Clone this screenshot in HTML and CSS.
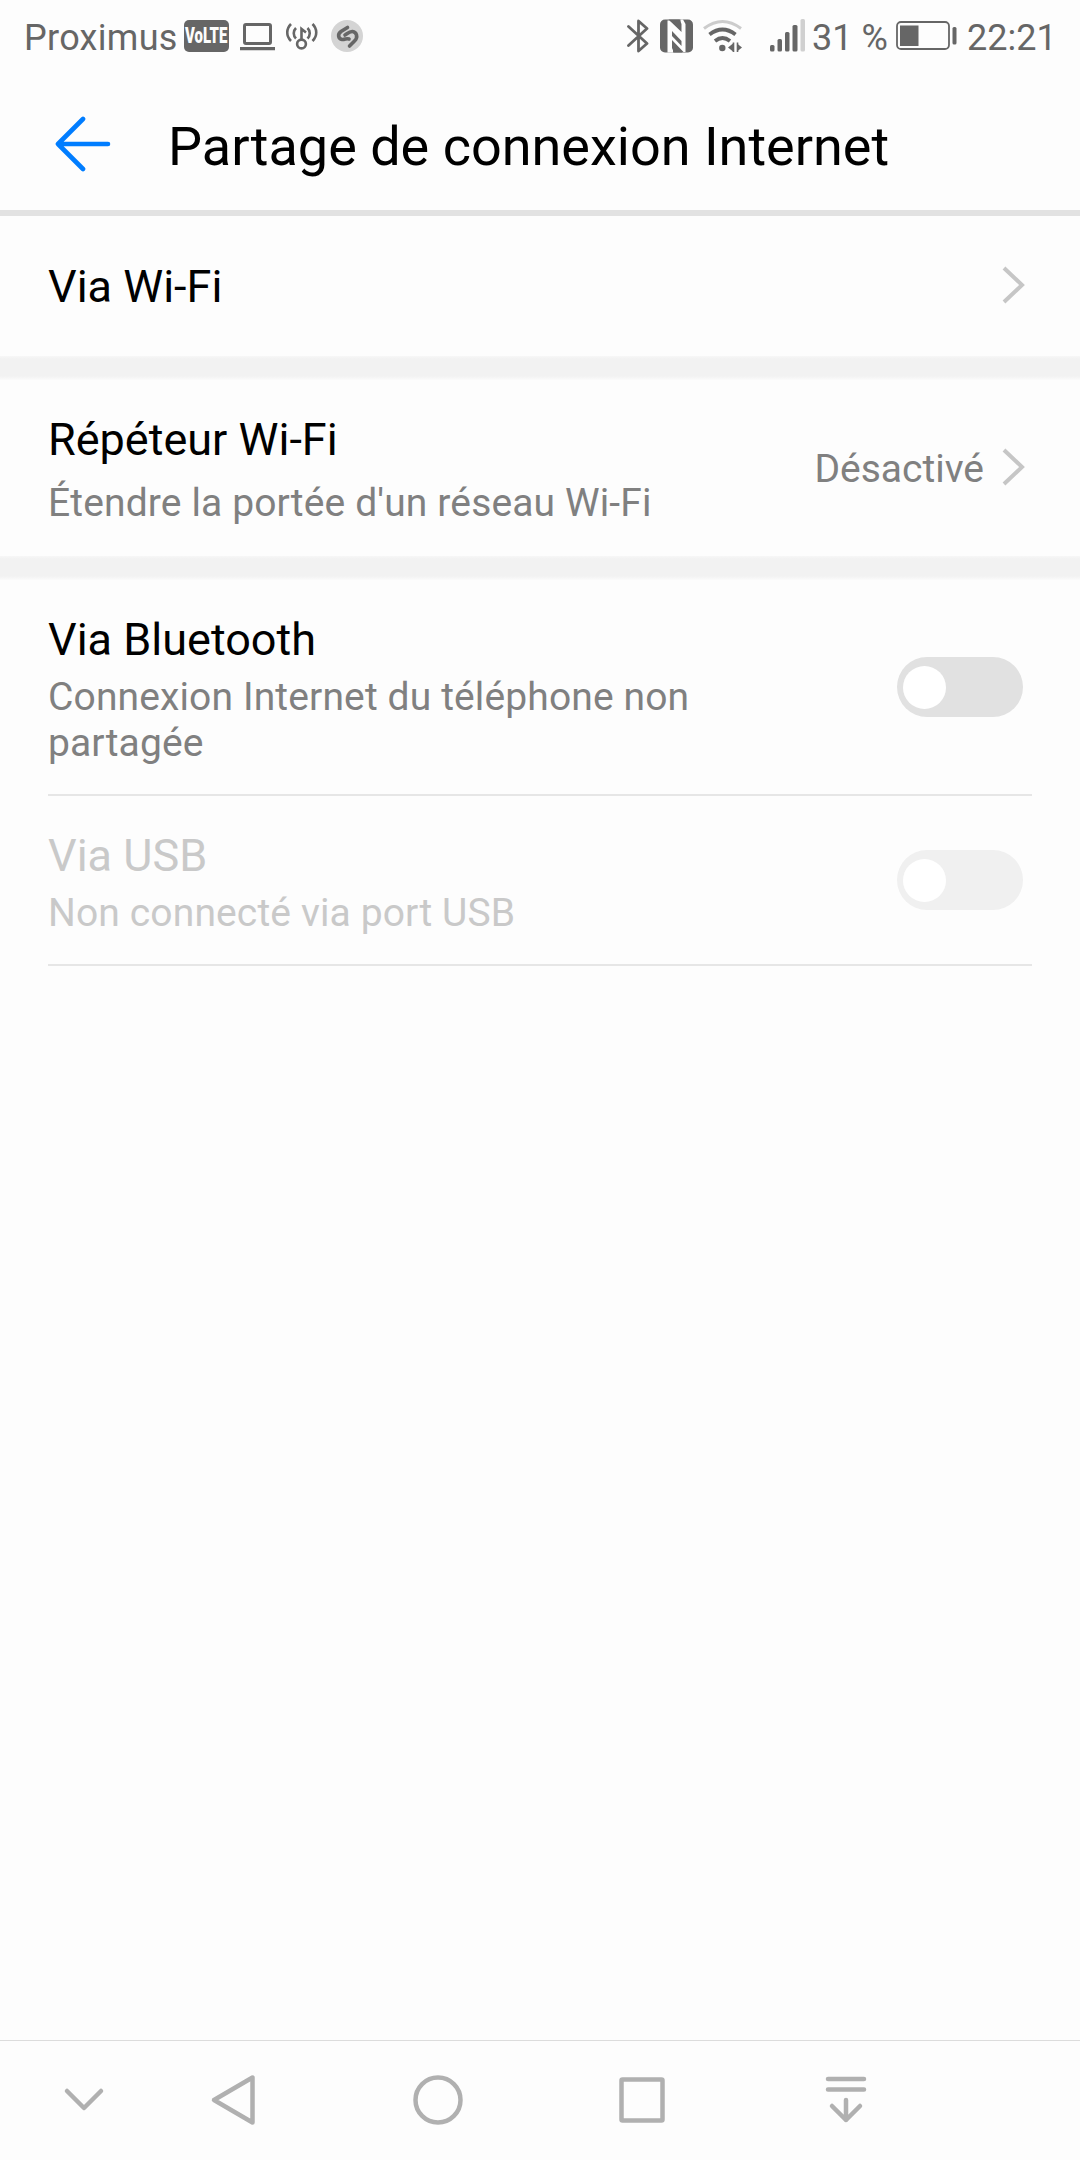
FILE: index.html
```html
<!DOCTYPE html>
<html lang="fr">
<head>
    <meta charset="UTF-8">
    <meta name="viewport" content="width=device-width, initial-scale=1.0">
    <title>Partage de connexion Internet</title>
    <link rel="stylesheet" href="styles.css">
</head>
<body>
    <div class="statusbar">
        <div class="status-left">
            <span class="carrier">Proximus</span>
            <span class="volte"><span class="volte-text">VoLTE</span></span>
            <svg class="icon-laptop" width="36" height="32" viewBox="0 0 36 32">
                <rect x="4.5" y="4.5" width="26" height="19" rx="1.5" fill="none" stroke="#666" stroke-width="3"/>
                <path d="M0 27h35v3.2H0z" fill="#666"/>
            </svg>
            <svg class="icon-hotspot" width="34" height="32" viewBox="0 0 34 32" fill="none" stroke="#666" stroke-width="2.6">
                <circle cx="16.5" cy="24" r="4.4"/>
                <path d="M16.500 19.500V9l4.500 3.500"/>
                <path d="M11 8c-3 3-3 7.500 0 10.500M6 4c-5 5-5 12 0 17M22.500 8c3 3 3 7.500 0 10.500M27.500 4c5 5 5 12 0 17"/>
            </svg>
            <svg class="icon-shazam" width="32" height="32" viewBox="0 0 32 32">
                <circle cx="16" cy="16" r="16" fill="#d4d4d4"/>
                <path d="M16.500 7.500L10 11.500c-4 3-2.500 7.500 1 8 3 .3 4.500-1.500 7-.5M18.500 26l5-5c4-4 2-9-2-9.500-3-.3-5 2-7.500 3.500" fill="none" stroke="#666" stroke-width="3.600" stroke-linecap="round"/>
            </svg>
        </div>
        <div class="status-right">
            <svg class="icon-bluetooth" width="22" height="34" viewBox="0 0 22 34" fill="none" stroke="#666" stroke-width="2.800">
                <path d="M1.500 7.500L20 24.500l-8.500 7.500V2L20 9.500 1.500 26.500" stroke-linejoin="round" stroke-linecap="round"/>
            </svg>
            <svg class="icon-nfc" width="34" height="34" viewBox="0 0 34 34">
                <rect x="0" y="0.500" width="33" height="33" rx="5" fill="#666"/>
                <path d="M7.500 33.500V1.500h2L21.500 13V5l-2-4.500h3.500L25.500 5v28h-2L12 21v8l2 4.500h-4z" fill="#fdfdfd"/>
                <path d="M12 12l9.500 10v5L12 17z" fill="#666"/>
                <path d="M8.500 0.500h12v9.500z" fill="#666"/>
                <path d="M13 24l9.500 9.500H13z" fill="#666"/>
            </svg>
            <svg class="icon-wifi" width="40" height="34" viewBox="0 0 40 34" fill="none" stroke="#666" stroke-width="3.800">
                <path d="M1 9.500Q19.500-4.500 38 9.500" stroke="#ccc" stroke-width="3"/>
                <path d="M6.500 15.500Q19.500 5.500 32.500 15.500M12 22q7.500-6 15 0"/>
                <circle cx="19.300" cy="29" r="3.200" fill="#666" stroke="none"/>
                <path d="M25 28.500l5-4v8zM39 28.500l-5-4v8z" fill="#666" stroke="none"/>
                <path d="M30.500 23.500v9.500M34.500 23.500v9.500" stroke-width="1.600"/>
            </svg>
            <svg class="icon-signal" width="36" height="34" viewBox="0 0 36 34">
                <rect x="0" y="26" width="4.500" height="6.500" rx="1.500" fill="#666"/>
                <rect x="7.500" y="20" width="4.500" height="12.500" rx="1.500" fill="#666"/>
                <rect x="15" y="13" width="4.500" height="19.500" rx="1.500" fill="#666"/>
                <rect x="22.500" y="6" width="5" height="26.500" rx="1.500" fill="#666"/>
                <rect x="30.500" y="0" width="4.500" height="32.500" rx="1.500" fill="#d0d0d0"/>
            </svg>
            <span class="percent">31 %</span>
            <svg class="icon-battery" width="62" height="30" viewBox="0 0 62 30">
                <rect x="1" y="1" width="52" height="27" rx="4" fill="none" stroke="#666" stroke-width="1.800"/>
                <rect x="4" y="4.500" width="18.500" height="20.500" fill="#666"/>
                <rect x="56.500" y="6" width="4" height="17.500" rx="1.500" fill="#666"/>
            </svg>
            <span class="clock">22:21</span>
        </div>
    </div>

    <div class="header">
        <svg class="back" width="58" height="58" viewBox="0 0 58 58">
            <path d="M53 29H3M28 4L3 29l25 25" fill="none" stroke="#007dff" stroke-width="4.600" stroke-linecap="round" stroke-linejoin="round"/>
        </svg>
        <h1>Partage de connexion Internet</h1>
    </div>

    <div class="list">
        <div class="row row-single">
            <div class="title">Via Wi-Fi</div>
            <svg class="chevron" width="24" height="40" viewBox="0 0 24 40">
                <path d="M3 2l18 17L3 36" fill="none" stroke="#c6c6c6" stroke-width="4"/>
            </svg>
        </div>
        <div class="gap"></div>
        <div class="row row-repeater">
            <div class="texts">
                <div class="title">Répéteur Wi-Fi</div>
                <div class="sub">Étendre la portée d'un réseau Wi-Fi</div>
            </div>
            <div class="value">Désactivé</div>
            <svg class="chevron" width="24" height="40" viewBox="0 0 24 40">
                <path d="M3 2l18 17L3 36" fill="none" stroke="#c6c6c6" stroke-width="4"/>
            </svg>
        </div>
        <div class="gap"></div>
        <div class="row row-bluetooth">
            <div class="texts">
                <div class="title">Via Bluetooth</div>
                <div class="sub">Connexion Internet du téléphone non partagée</div>
            </div>
            <div class="switch"><div class="knob"></div></div>
        </div>
        <div class="line"></div>
        <div class="row row-usb disabled">
            <div class="texts">
                <div class="title">Via USB</div>
                <div class="sub">Non connecté via port USB</div>
            </div>
            <div class="switch"><div class="knob"></div></div>
        </div>
        <div class="line"></div>
    </div>

    <div class="navbar">
        <svg class="nav-hide" width="42" height="26" viewBox="0 0 42 26">
            <path d="M4 4l17 17L38 4"/>
        </svg>
        <svg class="nav-back" width="46" height="54" viewBox="0 0 46 54">
            <path d="M42.500 4.500v45L4 27z"/>
        </svg>
        <svg class="nav-home" width="50" height="50" viewBox="0 0 50 50">
            <circle cx="25" cy="25" r="22.500"/>
        </svg>
        <svg class="nav-recent" width="46" height="46" viewBox="0 0 46 46">
            <rect x="2.500" y="2.500" width="41" height="41" rx="1"/>
        </svg>
        <svg class="nav-panel" width="42" height="48" viewBox="0 0 42 48">
            <path d="M3 3h36M3 13.500h36M21 24v20M7 30l14 14 14-14"/>
        </svg>
    </div>
</body>
</html>
```
FILE: styles.css
```css
body {
    margin: 0;
    height: 2160px;
    display: flex;
    flex-direction: column;
    background-color: #fdfdfd;
    font-family: Roboto, "Liberation Sans", sans-serif;
    color: #000;
}
svg {
    display: block;
    flex-shrink: 0;
}

/* status bar */
.statusbar {
    height: 72px;
    display: flex;
    justify-content: space-between;
    padding: 0 28px 0 24px;
    color: #666;
    font-size: 36px;
    line-height: 42px;
}
.status-left,
.status-right {
    display: flex;
    align-items: center;
}
.carrier,
.percent,
.clock {
    padding-top: 3px;
    white-space: nowrap;
}
.carrier {
    width: 160px;
    letter-spacing: 0.3px;
}
.volte {
    width: 45px;
    height: 32px;
    border-radius: 5px;
    background-color: #666;
    color: #fdfdfd;
    display: flex;
    align-items: center;
    justify-content: center;
}
.volte-text {
    font-size: 22px;
    font-weight: 900;
    line-height: 32px;
    transform: scaleX(0.68);
}
.icon-laptop {
    margin-left: 11px;
}
.icon-hotspot {
    margin-left: 9px;
}
.icon-shazam {
    margin-left: 12px;
}
.icon-nfc {
    margin-left: 11px;
}
.icon-wifi {
    margin-left: 9px;
}
.icon-signal {
    margin-left: 27px;
}
.percent {
    width: 73px;
    margin-left: 6px;
}
.icon-battery {
    margin-left: 11px;
}
.clock {
    width: 85px;
    margin-left: 9px;
}

/* header */
.header {
    height: 132px;
    padding: 6px 0 0 55px;
    border-bottom: 6px solid #e2e2e2;
    display: flex;
    align-items: center;
}
h1 {
    margin: 0;
    padding: 5px 0 0 55px;
    font-size: 54px;
    line-height: 64px;
    font-weight: 400;
    white-space: nowrap;
}

/* list */
.list {
    flex: 1;
}
.row {
    display: flex;
    align-items: center;
    padding: 0 55px 0 48px;
}
.row-single {
    height: 140px;
    justify-content: space-between;
}
.row-single .title {
    padding-top: 2px;
}
.row-repeater {
    height: 176px;
}
.row-bluetooth {
    height: 214px;
}
.row-usb {
    height: 168px;
}
.texts {
    flex: 1;
    padding-top: 5px;
}
.title {
    font-size: 45px;
    line-height: 54px;
}
.sub {
    width: 680px;
    margin-top: 7px;
    font-size: 39px;
    line-height: 46px;
    letter-spacing: 0.13px;
    color: #808080;
}
.row-repeater .sub {
    margin-top: 13px;
}
.row-repeater .texts {
    padding-top: 2px;
}
.value {
    padding-top: 2px;
    margin-right: 17px;
    font-size: 39px;
    line-height: 46px;
    color: #808080;
}
.gap {
    height: 24px;
    background: linear-gradient(#f7f7f7, #f2f2f2 3px, #f2f2f2 20px, #fbfbfb);
}
.line {
    height: 2px;
    margin: 0 48px;
    background-color: #e6e6e6;
}
.switch {
    width: 126px;
    height: 60px;
    margin-right: 2px;
    border-radius: 30px;
    background-color: #e1e1e1;
    display: flex;
    align-items: center;
}
.knob {
    width: 43px;
    height: 43px;
    margin-left: 6px;
    border-radius: 50%;
    background-color: #fff;
}
.disabled .title,
.disabled .sub {
    color: #c9c9c9;
}
.disabled .switch {
    background-color: #f0f0f0;
}

/* navigation bar */
.navbar {
    height: 117px;
    border-top: 1px solid #dcdcdc;
    display: flex;
    align-items: center;
    padding: 0 0 2px 63px;
    fill: none;
    stroke: #b0b0b0;
    stroke-width: 4.5;
    stroke-linecap: round;
    stroke-linejoin: round;
}
.nav-back {
    margin-left: 105px;
}
.nav-home {
    margin-left: 157px;
}
.nav-recent {
    margin-left: 156px;
}
.nav-panel {
    margin-left: 160px;
}
```
